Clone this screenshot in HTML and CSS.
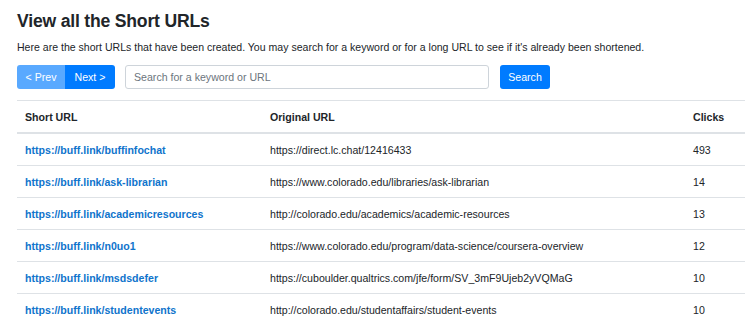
FILE: index.html
```html
<!DOCTYPE html>
<html lang="en">
<head>
    <meta charset="UTF-8">
    <meta name="viewport" content="width=device-width, initial-scale=1.0">
    <title>View all the Short URLs</title>
    <link rel="stylesheet" href="styles.css">
</head>
<body>
    <div class="container">
        <h1>View all the Short URLs</h1>
        <p class="lead">Here are the short URLs that have been created. You may search for a keyword or for a long URL to see if it's already been shortened.</p>

        <form class="toolbar">
            <div class="pager">
                <button type="button" class="btn btn-prev" disabled>&lt; Prev</button>
                <button type="button" class="btn btn-next">Next &gt;</button>
            </div>
            <input type="text" class="search-input" placeholder="Search for a keyword or URL">
            <button type="submit" class="btn btn-search">Search</button>
        </form>

        <table class="urls">
            <thead>
                <tr>
                    <th class="col-short">Short URL</th>
                    <th class="col-long">Original URL</th>
                    <th>Clicks</th>
                </tr>
            </thead>
            <tbody>
                <tr>
                    <td><a href="#">https://buff.link/buffinfochat</a></td>
                    <td>https://direct.lc.chat/12416433</td>
                    <td>493</td>
                </tr>
                <tr>
                    <td><a href="#">https://buff.link/ask-librarian</a></td>
                    <td>https://www.colorado.edu/libraries/ask-librarian</td>
                    <td>14</td>
                </tr>
                <tr>
                    <td><a href="#">https://buff.link/academicresources</a></td>
                    <td>http://colorado.edu/academics/academic-resources</td>
                    <td>13</td>
                </tr>
                <tr>
                    <td><a href="#">https://buff.link/n0uo1</a></td>
                    <td>https://www.colorado.edu/program/data-science/coursera-overview</td>
                    <td>12</td>
                </tr>
                <tr>
                    <td><a href="#">https://buff.link/msdsdefer</a></td>
                    <td>https://cuboulder.qualtrics.com/jfe/form/SV_3mF9Ujeb2yVQMaG</td>
                    <td>10</td>
                </tr>
                <tr>
                    <td><a href="#">https://buff.link/studentevents</a></td>
                    <td>http://colorado.edu/studentaffairs/student-events</td>
                    <td>10</td>
                </tr>
            </tbody>
        </table>
    </div>
</body>
</html>
```

FILE: styles.css
```css
body {
    font-family: "Liberation Sans", Arial, sans-serif;
    font-size: 10.6px;
    color: #212529;
    background-color: #fff;
    margin: 0;
}
.container {
    width: 728px;
    padding: 10px 0 0 17px;
}
h1 {
    font-size: 17.6px;
    font-weight: bold;
    letter-spacing: -0.2px;
    line-height: 22px;
    margin: 0 0 7px;
}
.lead {
    font-size: 10.55px;
    margin: 0 0 10px;
    line-height: 16px;
}
.toolbar {
    display: flex;
    align-items: center;
    margin-bottom: 11px;
}
.pager {
    display: flex;
}
.btn {
    font-family: inherit;
    font-size: 10.6px;
    height: 24px;
    padding: 0;
    white-space: nowrap;
    color: #fff;
    background-color: #007bff;
    border: none;
    border-radius: 3px;
    cursor: pointer;
}
.btn-prev {
    width: 48px;
    background-color: #59a9ff;
    border-radius: 3px 0 0 3px;
}
.btn-next {
    width: 50px;
    border-radius: 0 3px 3px 0;
}
.search-input {
    width: 364px;
    height: 24px;
    box-sizing: border-box;
    margin-left: 10px;
    padding: 0 8px;
    font-family: inherit;
    font-size: 10.6px;
    color: #495057;
    border: 1px solid #ced4da;
    border-radius: 3px;
}
.search-input::placeholder {
    color: #6c757d;
}
.btn-search {
    width: 50px;
    margin-left: 11px;
}
.urls {
    width: 728px;
    border-collapse: collapse;
}
.urls th, .urls td {
    text-align: left;
    padding: 8px 8px 7px;
    line-height: 16px;
    border-top: 1px solid #dee2e6;
    white-space: nowrap;
}
.urls thead th {
    border-bottom: 2px solid #dee2e6;
}
.col-short {
    width: 229px;
}
.col-long {
    width: 407px;
}
.urls a {
    color: #0f74cc;
    font-weight: bold;
    text-decoration: none;
}
```
